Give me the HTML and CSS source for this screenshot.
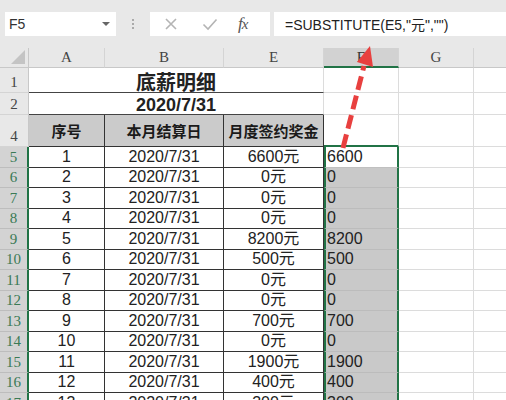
FILE: index.html
```html
<!DOCTYPE html>
<html>
<head>
<meta charset="utf-8">
<link rel="stylesheet" href="styles.css">
</head>
<body>
<div class="app">
  <div class="fbar">
    <div class="namebox"><span>F5</span><span class="dd"></span></div>
    <div class="grip"><i></i><i></i><i></i></div>
    <div class="btns">
      <svg class="ico" width="14" height="14" viewBox="0 0 14 14"><path d="M2 2 L12 12 M12 2 L2 12" stroke="#b4b4b4" stroke-width="1.6" fill="none"/></svg>
      <svg class="ico" width="16" height="14" viewBox="0 0 16 14"><path d="M1.5 7.5 L6 12 L14.5 2.5" stroke="#b4b4b4" stroke-width="1.6" fill="none"/></svg>
      <span class="fx">f<span class="x">x</span></span>
    </div>
    <div class="formula">=SUBSTITUTE(E5,"元","")</div>
  </div>

  <div class="sheet">
    <div class="ch corner"><span class="tri"></span></div>
    <div class="ch">A</div>
    <div class="ch">B</div>
    <div class="ch">E</div>
    <div class="ch sel">F</div>
    <div class="ch">G</div>
    <div class="ch last"></div>

    <div class="rh">1</div>
    <div class="c merged title">底薪明细</div>
    <div class="c"></div><div class="c"></div><div class="c last"></div>

    <div class="rh">2</div>
    <div class="c merged sub">2020/7/31</div>
    <div class="c"></div><div class="c"></div><div class="c last"></div>

    <div class="rh">4</div>
    <div class="c t th">序号</div>
    <div class="c t th">本月结算日</div>
    <div class="c t th">月度签约奖金</div>
    <div class="c ftop"></div><div class="c"></div><div class="c last"></div>

    <div class="rh on">5</div><div class="c t">1</div><div class="c t">2020/7/31</div><div class="c t"><span>6600元</span></div><div class="c f first">6600</div><div class="c"></div><div class="c last"></div>
    <div class="rh on">6</div><div class="c t">2</div><div class="c t">2020/7/31</div><div class="c t"><span>0元</span></div><div class="c f">0</div><div class="c"></div><div class="c last"></div>
    <div class="rh on">7</div><div class="c t">3</div><div class="c t">2020/7/31</div><div class="c t"><span>0元</span></div><div class="c f">0</div><div class="c"></div><div class="c last"></div>
    <div class="rh on">8</div><div class="c t">4</div><div class="c t">2020/7/31</div><div class="c t"><span>0元</span></div><div class="c f">0</div><div class="c"></div><div class="c last"></div>
    <div class="rh on">9</div><div class="c t">5</div><div class="c t">2020/7/31</div><div class="c t"><span>8200元</span></div><div class="c f">8200</div><div class="c"></div><div class="c last"></div>
    <div class="rh on">10</div><div class="c t">6</div><div class="c t">2020/7/31</div><div class="c t"><span>500元</span></div><div class="c f">500</div><div class="c"></div><div class="c last"></div>
    <div class="rh on">11</div><div class="c t">7</div><div class="c t">2020/7/31</div><div class="c t"><span>0元</span></div><div class="c f">0</div><div class="c"></div><div class="c last"></div>
    <div class="rh on">12</div><div class="c t">8</div><div class="c t">2020/7/31</div><div class="c t"><span>0元</span></div><div class="c f">0</div><div class="c"></div><div class="c last"></div>
    <div class="rh on">13</div><div class="c t">9</div><div class="c t">2020/7/31</div><div class="c t"><span>700元</span></div><div class="c f">700</div><div class="c"></div><div class="c last"></div>
    <div class="rh on">14</div><div class="c t">10</div><div class="c t">2020/7/31</div><div class="c t"><span>0元</span></div><div class="c f">0</div><div class="c"></div><div class="c last"></div>
    <div class="rh on">15</div><div class="c t">11</div><div class="c t">2020/7/31</div><div class="c t"><span>1900元</span></div><div class="c f">1900</div><div class="c"></div><div class="c last"></div>
    <div class="rh on">16</div><div class="c t">12</div><div class="c t">2020/7/31</div><div class="c t"><span>400元</span></div><div class="c f">400</div><div class="c"></div><div class="c last"></div>
    <div class="rh on">17</div><div class="c t">13</div><div class="c t">2020/7/31</div><div class="c t"><span>300元</span></div><div class="c f">300</div><div class="c"></div><div class="c last"></div>
  </div>

  <svg class="arrow" width="506" height="400" viewBox="0 0 506 400">
    <line x1="343" y1="148" x2="364" y2="66" stroke="#e8403f" stroke-width="5" stroke-dasharray="14 6"/>
    <polygon points="370,46 373,67 357,62" fill="#e8403f"/>
  </svg>
</div>
</body>
</html>
```

FILE: styles.css
```css
* { box-sizing: border-box; }
html, body { margin: 0; padding: 0; }
body {
  background: #fff;
  font-family: "Liberation Sans", "Noto Sans CJK SC", sans-serif;
  color: #222;
}
.app {
  position: relative;
  width: 506px;
  height: 400px;
  overflow: hidden;
  background: #e8e8e8;
}
.fbar {
  height: 48px;
  display: flex;
  align-items: flex-start;
  padding-top: 12px;
  padding-left: 5px;
  background: #e8e8e8;
}
.namebox {
  width: 111px;
  height: 24px;
  background: #fff;
  display: flex;
  align-items: center;
  justify-content: space-between;
  padding: 0 6px 0 4px;
  font-size: 14px;
  color: #333;
}
.dd {
  width: 0; height: 0;
  border-left: 4px solid transparent;
  border-right: 4px solid transparent;
  border-top: 4px solid #666;
}
.grip {
  width: 34px;
  height: 24px;
  display: flex;
  flex-direction: column;
  align-items: center;
  justify-content: center;
  gap: 2px;
}
.grip i {
  display: block;
  width: 2px; height: 2px;
  background: #aaa;
}
.btns {
  width: 120px;
  height: 24px;
  background: #fff;
  display: flex;
  align-items: center;
  padding-left: 14px;
  gap: 0;
}
.btns .ico:first-child { margin-right: 24px; }
.btns .ico:nth-child(2) { margin-right: 20px; }
.fx {
  font-family: "Liberation Serif", serif;
  font-style: italic;
  font-size: 17px;
  color: #555;
  letter-spacing: -1px;
}
.fx .x { font-size: 15px; }
.formula {
  margin-left: 4px;
  flex: 1;
  height: 24px;
  background: #fff;
  display: flex;
  align-items: center;
  padding-left: 11px;
  font-size: 14px;
  color: #222;
}

.sheet {
  display: grid;
  grid-template-columns: 29px 76px 119px 100px 75px 75px 1fr;
  grid-template-rows: 20px 25px 22px 32px repeat(13, 20.5px);
  background: #fff;
}
.ch {
  background: #e8e8e8;
  border-right: 1px solid #d4d4d4;
  border-bottom: 1px solid #c8c8c8;
  display: flex;
  align-items: center;
  justify-content: center;
  font-family: "Liberation Serif", serif;
  font-size: 15px;
  color: #444;
}
.ch.last { border-right: none; }
.ch.sel {
  background: #d2d2d2;
  border-bottom: 2px solid #217346;
  color: #333;
}
.corner {
  position: relative;
  border-right: 1px solid #c8c8c8;
}
.tri {
  position: absolute;
  right: 3px;
  bottom: 3px;
  width: 0; height: 0;
  border-left: 14px solid transparent;
  border-bottom: 14px solid #c4c4c4;
}
.rh {
  background: #e8e8e8;
  border-right: 1px solid #c8c8c8;
  border-bottom: 1px solid #d4d4d4;
  display: flex;
  align-items: flex-end;
  justify-content: center;
  padding-bottom: 1px;
  font-family: "Liberation Serif", serif;
  font-size: 15px;
  color: #444;
}
.rh.on {
  background: #d3d3d3;
  color: #3a7a55;
  border-right: 2px solid #217346;
  border-bottom: 1px solid #bdbdbd;
}
.c {
  border-right: 1px solid #dcdcdc;
  border-bottom: 1px solid #dcdcdc;
  display: flex;
  align-items: center;
  justify-content: center;
  font-size: 16px;
  line-height: 18px;
  color: #222;
  white-space: nowrap;
}
.c.last { border-right: none; }
.c.merged {
  grid-column: span 3;
  border-right: 1px solid #dcdcdc;
  border-bottom: 1px solid #444;
  font-weight: bold;
  font-family: "Liberation Sans", "Noto Sans CJK SC", sans-serif;
  line-height: normal;
}
.c.title { font-size: 20px; padding-top: 2px; }
.c.sub { font-size: 18px; padding-top: 3px; }
.c.t {
  border-right: 1px solid #333;
  border-bottom: 1px solid #333;
}
.c.th {
  background: #cbcbcb;
  font-weight: bold;
  font-size: 15px;
  font-family: "Noto Sans CJK SC", sans-serif;
  line-height: normal;
  color: #1a1a1a;
}
.c.ftop { border-bottom: 2px solid #217346; }
.c.f {
  background: #c9c9c9;
  border-left: 2px solid #217346;
  border-right: 2px solid #217346;
  border-bottom: 1px solid #bcbcbc;
  justify-content: flex-start;
  padding-left: 1px;
}
.c.f.first { background: #fff; border-bottom: 1px solid #c0c0c0; }

.arrow {
  position: absolute;
  left: 0;
  top: 0;
  pointer-events: none;
}
```
